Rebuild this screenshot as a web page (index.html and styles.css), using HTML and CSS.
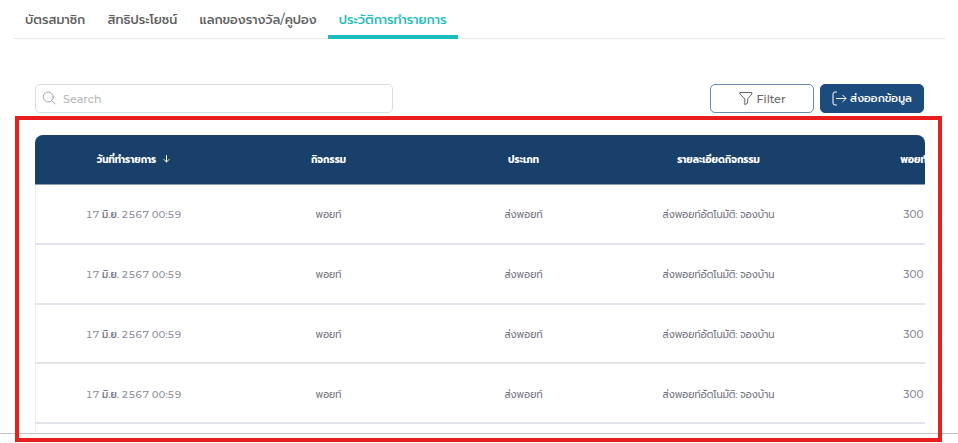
FILE: index.html
```
<!DOCTYPE html>
<html lang="th">
<head>
<meta charset="utf-8">
<title>ประวัติการทำรายการ</title>
<link rel="stylesheet" href="styles.css">
</head>
<body>
<nav class="tabs">
  <a class="tab">บัตรสมาชิก</a>
  <a class="tab">สิทธิประโยชน์</a>
  <a class="tab">แลกของรางวัล/คูปอง</a>
  <a class="tab active">ประวัติการทำรายการ</a>
</nav>
<div class="toolbar">
  <div class="search">
    <svg width="15" height="15" viewBox="0 0 15 15"><circle cx="6.2" cy="6" r="5"/><path d="M9.8 9.6 13.2 13"/></svg>
    <span>Search</span>
  </div>
  <div class="actions">
    <button class="btn filter"><svg width="14" height="15" viewBox="0 0 14 15"><path d="M1.2 1.5h11.6v1.700L8.600 8v4.100l-2.800 1.600V8L1.200 3.200z"/></svg><span>Filter</span></button>
    <button class="btn export"><svg width="15" height="15" viewBox="0 0 15 15"><path d="M4.500 1H3Q1 1 1 3v9q0 2 2 2h1.500M4.500 7.500H14M10.800 4.300 14 7.500l-3.200 3.200"/></svg><span>ส่งออกข้อมูล</span></button>
  </div>
</div>
<div class="table">
  <div class="row head"><div>วันที่ทำรายการ<svg width="7" height="8" viewBox="0 0 7 8"><path d="M3.500.5v6.500M1 4.500l2.500 2.500 2.500-2.500"/></svg></div><div>กิจกรรม</div><div>ประเภท</div><div>รายละเอียดกิจกรรม</div><div>พอยท์</div></div>
  <div class="row"><div class="date">17 <span>มิ.ย.</span> 2567 00:59</div><div>พอยท์</div><div>ส่งพอยท์</div><div>ส่งพอยท์อัตโนมัติ: จองบ้าน</div><div class="points">300</div></div>
  <div class="row"><div class="date">17 <span>มิ.ย.</span> 2567 00:59</div><div>พอยท์</div><div>ส่งพอยท์</div><div>ส่งพอยท์อัตโนมัติ: จองบ้าน</div><div class="points">300</div></div>
  <div class="row"><div class="date">17 <span>มิ.ย.</span> 2567 00:59</div><div>พอยท์</div><div>ส่งพอยท์</div><div>ส่งพอยท์อัตโนมัติ: จองบ้าน</div><div class="points">300</div></div>
  <div class="row"><div class="date">17 <span>มิ.ย.</span> 2567 00:59</div><div>พอยท์</div><div>ส่งพอยท์</div><div>ส่งพอยท์อัตโนมัติ: จองบ้าน</div><div class="points">300</div></div>
</div>
<div class="page-line"></div>
<div class="highlight"></div>
</body>
</html>
```
FILE: styles.css
```
* { box-sizing: border-box; }
body {
  margin: 0;
  height: 443px;
  position: relative;
  overflow: hidden;
  background: #fff;
  font-family: Montserrat, Prompt, Kanit, "Noto Sans Thai", "Noto Sans", sans-serif;
  color: #606060;
}
svg { fill: none; stroke: currentColor; flex: none; stroke-linecap: round; stroke-linejoin: round; }
.tabs {
  display: flex;
  height: 39px;
  margin: 0 13px 0 14px;
  border-bottom: 1px solid #e8e8e8;
}
.tab {
  height: 39px;
  padding: 0 11.1px;
  font-size: 12.55px;
  line-height: 39px;
  font-weight: 500;
  white-space: nowrap;
}
.tab.active { color: #1cbcbd; border-bottom: 4px solid #1cbcbd; }
.toolbar {
  display: flex;
  justify-content: space-between;
  margin: 45px 34px 0 35px;
  height: 29px;
}
.search {
  width: 358px;
  display: flex;
  align-items: center;
  padding-left: 6px;
  gap: 6px;
  border: 1px solid #dcdde0;
  border-radius: 5px;
  font-size: 11.2px;
  font-weight: 500;
  color: #b8b8bb;
}
.search svg { color: #a5a6ad; }
.actions { display: flex; gap: 6px; }
.btn {
  height: 29px;
  padding: 0;
  display: flex;
  align-items: center;
  justify-content: center;
  gap: 4px;
  border-radius: 5px;
  font: 500 11.1px Montserrat, Prompt, Kanit, "Noto Sans Thai", "Noto Sans", sans-serif;
  white-space: nowrap;
}
.filter { width: 104px; border: 1px solid #6c89ad; background: #fff; color: #666; }
.export { width: 104px; border: 1px solid #1c4b7e; background: #1c4b7e; color: #fff; font-size: 11px; gap: 3px; }
.table {
  width: 890px;
  height: 298px;
  margin: 22px 0 0 35px;
  overflow: hidden;
  border-radius: 8px 8px 0 0;
  background: linear-gradient(90deg, #eff0f2 1px, transparent 1px);
}
.row {
  display: grid;
  grid-template-columns: repeat(5, 195px);
  width: 975px;
  height: 59.8px;
  align-items: center;
  border-bottom: 2px solid #e1e5eb;
  font-size: 9.8px;
  color: #747481;
}
.row > div { text-align: center; white-space: nowrap; padding: 2px 0 0 2px; }
.row.head { height: 50px; background: #19406b; border-bottom: 1px solid #8b9eb7; color: #fff; font-weight: 700; }
.row.head > div { padding-top: 0; }
.head svg { margin-left: 7px; }
.row > .date { padding-left: 2px; font-size: 9.8px; font-weight: 500; color: #8c8c98; font-variant-numeric: tabular-nums; }
.date span { color: #747481; }
.row > .points { font-size: 10.5px; color: #8c8c98; font-weight: 500; }
.page-line {
  position: absolute;
  left: 0;
  right: 0;
  top: 433px;
  height: 1px;
  background: #c4c4c4;
}
.highlight {
  position: absolute;
  left: 15px;
  top: 116px;
  width: 927px;
  height: 326px;
  border: 4px solid #e81e1e;
}
```
